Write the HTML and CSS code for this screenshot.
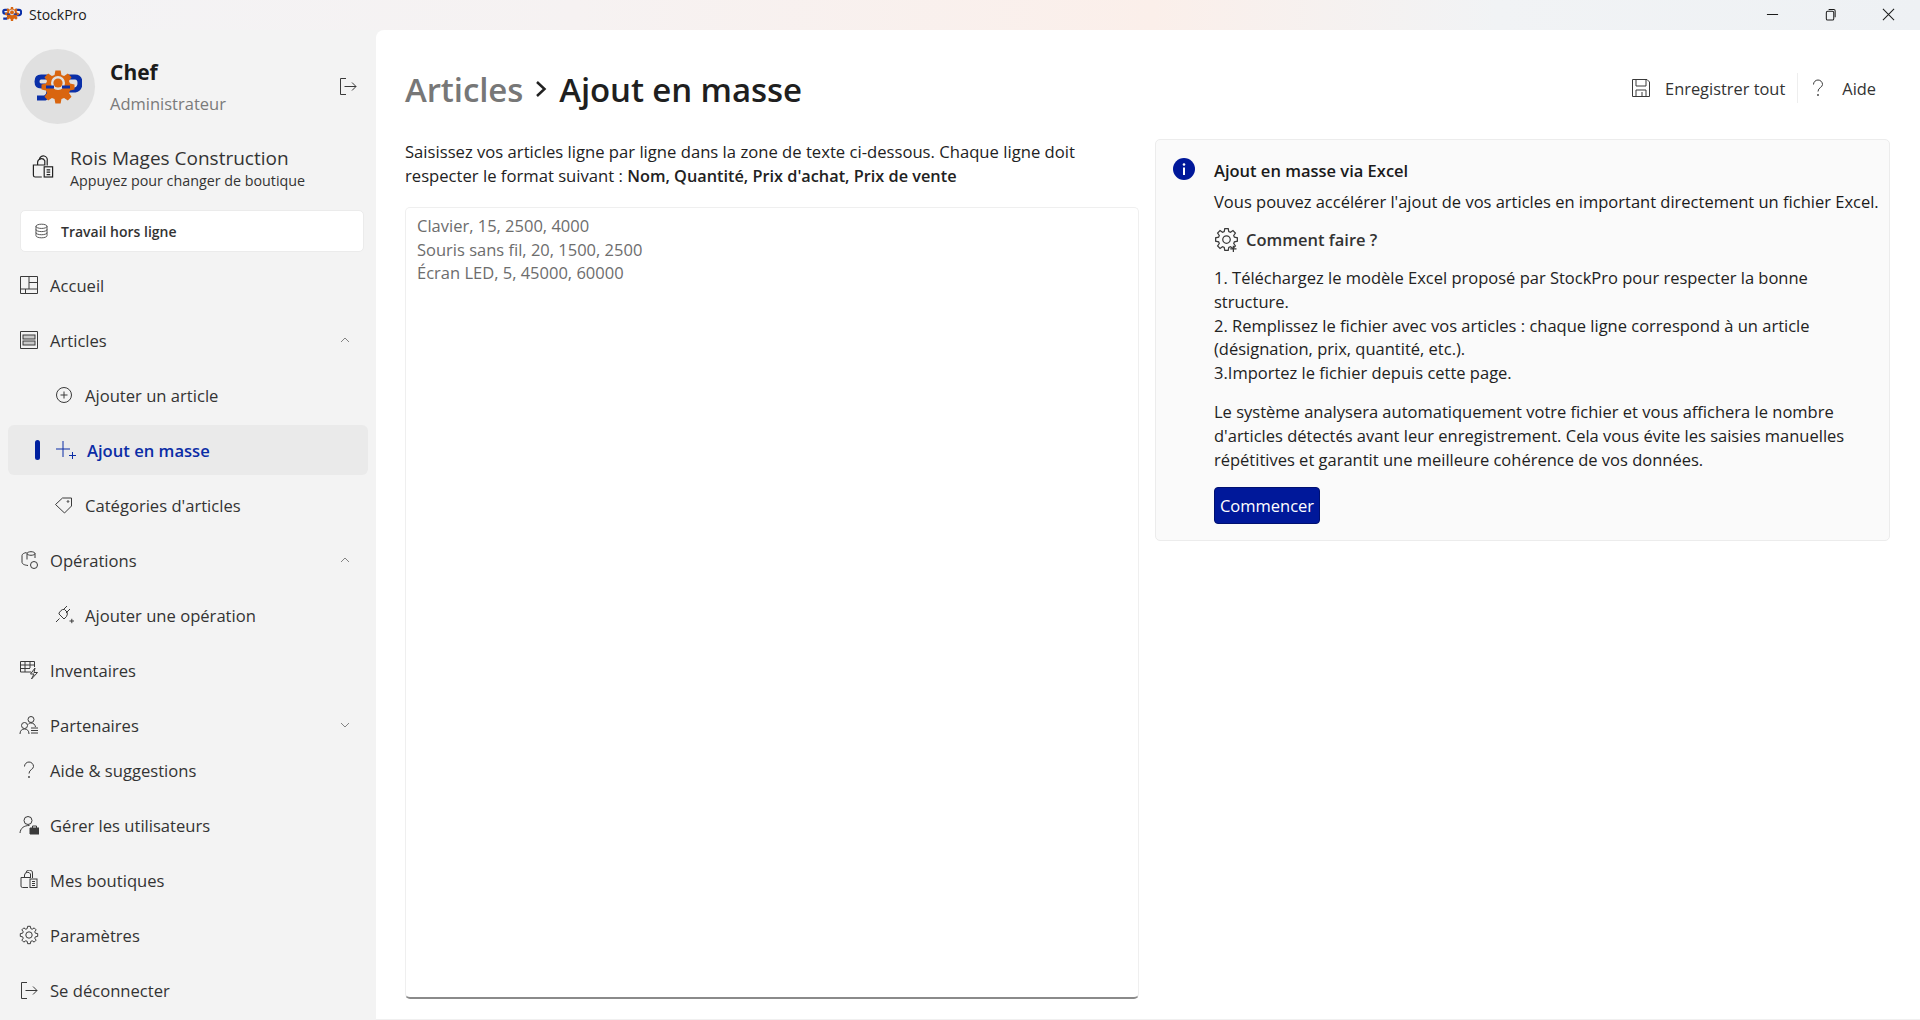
FILE: index.html
```html
<!DOCTYPE html>
<html lang="fr">
<head>
  <meta charset="UTF-8" />
  <title>StockPro</title>
  <link rel="stylesheet" href="styles.css">
</head>
<body>
  <svg class="defs" width="0" height="0">
    <symbol id="gear" viewBox="0 0 20 20">
      <polygon points="16.34,8.18 18.69,8.62 18.69,11.38 16.34,11.82 15.77,13.2 17.12,15.17 15.17,17.12 13.2,15.77 11.82,16.34 11.38,18.69 8.62,18.69 8.18,16.34 6.8,15.77 4.83,17.12 2.88,15.17 4.23,13.2 3.66,11.82 1.31,11.38 1.31,8.62 3.66,8.18 4.23,6.8 2.88,4.83 4.83,2.88 6.8,4.23 8.18,3.66 8.62,1.31 11.38,1.31 11.82,3.66 13.2,4.23 15.17,2.88 17.12,4.83 15.77,6.8" />
    </symbol>
    <symbol id="logo" viewBox="0 0 48 38">
      <path d="M15 9H7Q3 9 3 13.5T7 18H11Q15 18 15 23T11 30H3" fill="none" stroke="#0a2fa8" stroke-width="5" />
      <path d="M33 9H41Q46 9 46 15T41 22H33" fill="none" stroke="#0a2fa8" stroke-width="5" />
      <use href="#gear" x="5" y="0" width="38" height="38" fill="#d9650f" />
      <path d="M14 19a10 10 0 0 1 20 0z" fill="#d9650f" />
      <circle cx="24" cy="15" r="7" fill="#e0e0e0" />
      <circle cx="24" cy="15" r="4.6" fill="#d9650f" />
      <path d="M12 19H20M28 19H36" stroke="#0a2fa8" stroke-width="3" />
    </symbol>
    <symbol id="logout" viewBox="0 0 20 20">
      <path d="M8 2.5H2.5V18.5H8M6.5 10.5H18M14 6.5L18 10.5L14 14.5" />
    </symbol>
    <symbol id="shop" viewBox="0 0 20 20">
      <path d="M9 17.5H3.5A1.5 1.5 0 0 1 2 16V7.5H12M5.5 7.5V5A3.2 3.2 0 0 1 11.5 4V7.5M7 2.5A3.2 3.2 0 0 1 13.5 4V8" />
      <rect x="11" y="9" width="7" height="8.5" />
      <path d="M13 11.5H16M13 13.5H16M13 15.5H16" />
    </symbol>
    <symbol id="help" viewBox="0 0 20 20">
      <path d="M5.5 6.5A4.5 4.5 0 0 1 14.5 6.5C14.5 9.5 10 9.5 10 13.5" />
      <circle cx="10" cy="17" r=".6" />
    </symbol>
  </svg>

  <header class="titlebar">
    <div class="app-name">
      <svg class="app-logo"><use href="#logo" /></svg>
      <span>StockPro</span>
    </div>
    <div class="window-btns">
      <svg class="win-ic" viewBox="0 0 14 14"><path d="M1 7H13" /></svg>
      <svg class="win-ic" viewBox="0 0 14 14"><rect x="2.5" y="3.5" width="8" height="9.5" rx="1.5" /><path d="M5 1.5H10.5A1.5 1.5 0 0 1 12 3V10" /></svg>
      <svg class="win-ic" viewBox="0 0 14 14"><path d="M1 1L13 13M13 1L1 13" /></svg>
    </div>
  </header>

  <div class="app">
    <aside class="sidebar">
      <div class="profile">
        <div class="avatar"><svg class="avatar-logo"><use href="#logo" /></svg></div>
        <div class="profile-text">
          <div class="profile-name">Chef</div>
          <div class="profile-role">Administrateur</div>
        </div>
        <svg class="ic logout-ic"><use href="#logout" /></svg>
      </div>

      <div class="store">
        <svg class="store-ic ic"><use href="#shop" /></svg>
        <div>
          <div class="store-name">Rois Mages Construction</div>
          <div class="store-sub">Appuyez pour changer de boutique</div>
        </div>
      </div>

      <div class="offline">
        <svg class="ic offline-ic" viewBox="0 0 20 20"><ellipse cx="10" cy="4.5" rx="6.5" ry="2.5" /><path d="M3.5 4.5V15.5C3.5 17 6.5 18 10 18S16.5 17 16.5 15.5V4.5M3.5 8.2C3.5 9.7 6.5 10.7 10 10.7S16.5 9.7 16.5 8.2M3.5 11.9C3.5 13.4 6.5 14.4 10 14.4S16.5 13.4 16.5 11.9" /></svg>
        <span>Travail hors ligne</span>
      </div>

      <nav class="nav">
        <a class="nav-item">
          <svg class="ic" viewBox="0 0 20 20"><path d="M1.5 1.5H18.5V18.5H1.5ZM10 1.5V14M10 7.5H18.5M1.5 14H18.5M6.5 14V18.5" /></svg>
          <span>Accueil</span>
        </a>
        <a class="nav-item">
          <svg class="ic" viewBox="0 0 20 20"><path d="M1.5 1.5H18.5V18.5H1.5Z" /><rect class="ic-fill" x="4" y="5" width="12" height="4" /><rect class="ic-fill" x="4" y="11" width="12" height="4" /></svg>
          <span>Articles</span>
          <svg class="chev" viewBox="0 0 10 10"><path d="M1 7L5 3L9 7" /></svg>
        </a>
        <a class="nav-item sub">
          <svg class="ic" viewBox="0 0 20 20"><circle cx="10" cy="10" r="7.5" /><path d="M10 6.5V13.5M6.5 10H13.5" /></svg>
          <span>Ajouter un article</span>
        </a>
        <a class="nav-item sub active">
          <i class="active-bar"></i>
          <svg class="ic" viewBox="0 0 20 20"><path d="M0 9H14M7 1V17M13 15.5H20M16.5 12V19" /></svg>
          <span>Ajout en masse</span>
        </a>
        <a class="nav-item sub">
          <svg class="ic" viewBox="0 0 20 20"><path d="M1.5 9.5L8.5 3H17.5V11L10.5 18Z" /><circle cx="14" cy="6.5" r=".8" /></svg>
          <span>Catégories d'articles</span>
        </a>
        <a class="nav-item">
          <svg class="ic" viewBox="0 0 20 20"><path d="M8 9.5V3.5C8 2.5 10 1.7 12 1.7S16 2.5 16 3.5V8M8 3.5C8 4.5 10 5.3 12 5.3S16 4.5 16 3.5M3 12V5.5C3 4 5 3 7.5 2.5M3 12C3 14 5 15 9 15.5" /><circle cx="15" cy="15" r="3.5" /></svg>
          <span>Opérations</span>
          <svg class="chev" viewBox="0 0 10 10"><path d="M1 7L5 3L9 7" /></svg>
        </a>
        <a class="nav-item sub">
          <svg class="ic" viewBox="0 0 20 20"><path d="M2 17L5.5 13.5M5 9L10 14L12.5 11.5Q14 9 13 7L10.5 4.5Q8.5 4 7 5.5L5 8ZM9 5L13 1M12 8L16 4M15.5 16H20M17.8 13.8V18.2" /></svg>
          <span>Ajouter une opération</span>
        </a>
        <a class="nav-item">
          <svg class="ic" viewBox="0 0 20 20"><path d="M12 12H1.5V1.5H15.5V7M1.5 5H15.5M1.5 8.5H11M6 1.5V12M11 1.5V8M16 8L11.5 14H15L12.5 19L18.5 12.5H15Z" /></svg>
          <span>Inventaires</span>
        </a>
        <a class="nav-item">
          <svg class="ic" viewBox="0 0 20 20"><circle cx="5.5" cy="10.5" r="3" /><circle cx="12" cy="4.5" r="3" /><path d="M1 19C1 15.5 3 14 5.5 14S10 15.5 10 19M9 9.5C10 8.3 11 8 12 8C14.5 8 16 9.5 16.5 12M12 13H19M12 15.5H19M12 18H19" /></svg>
          <span>Partenaires</span>
          <svg class="chev" viewBox="0 0 10 10"><path d="M1 3L5 7L9 3" /></svg>
        </a>
      </nav>

      <nav class="nav nav-footer">
        <a class="nav-item">
          <svg class="ic"><use href="#help" /></svg>
          <span>Aide &amp; suggestions</span>
        </a>
        <a class="nav-item">
          <svg class="ic" viewBox="0 0 20 20"><circle cx="9" cy="5.5" r="4" /><path d="M1 18C1.5 13 5 10.5 10.5 10.5" /><path class="ic-fill-dark" d="M11 13H20V19H11Z" /><path d="M13.5 13V11H17.5V13" /></svg>
          <span>Gérer les utilisateurs</span>
        </a>
        <a class="nav-item">
          <svg class="ic"><use href="#shop" /></svg>
          <span>Mes boutiques</span>
        </a>
        <a class="nav-item">
          <svg class="ic" viewBox="0 0 20 20"><use href="#gear" /><circle cx="10" cy="10" r="3.2" /></svg>
          <span>Paramètres</span>
        </a>
        <a class="nav-item">
          <svg class="ic"><use href="#logout" /></svg>
          <span>Se déconnecter</span>
        </a>
      </nav>
    </aside>

    <main class="content">
      <div class="page-head">
        <h1 class="crumbs">
          <span class="crumb-parent">Articles</span>
          <svg class="crumb-sep" viewBox="0 0 12 18"><path d="M2 2L9.5 9L2 16" /></svg>
          <span>Ajout en masse</span>
        </h1>
        <div class="toolbar">
          <a class="tool">
            <svg class="ic" viewBox="0 0 20 20"><path d="M1.5 1.5H16L18.5 4V18.5H1.5ZM5 1.5V8H15V1.5M5 18.5V12H15V18.5M11 14V18.5" /></svg>
            <span>Enregistrer tout</span>
          </a>
          <i class="tool-sep"></i>
          <a class="tool">
            <svg class="ic"><use href="#help" /></svg>
            <span>Aide</span>
          </a>
        </div>
      </div>

      <div class="columns">
        <section class="entry">
          <p class="intro">Saisissez vos articles ligne par ligne dans la zone de texte ci-dessous. Chaque ligne doit<br>respecter le format suivant : <strong>Nom, Quantité, Prix d'achat, Prix de vente</strong></p>
          <div class="textbox">
            <div class="placeholder">Clavier, 15, 2500, 4000<br>Souris sans fil, 20, 1500, 2500<br>Écran LED, 5, 45000, 60000</div>
          </div>
        </section>

        <section class="info-card">
          <svg class="info-ic" viewBox="0 0 22 22"><circle cx="11" cy="11" r="11" /><rect class="info-mark" x="10" y="9.5" width="2" height="7.5" /><circle class="info-mark" cx="11" cy="6.5" r="1.3" /></svg>
          <div class="info-body">
            <div class="info-title">Ajout en masse via Excel</div>
            <div class="info-lead">Vous pouvez accélérer l'ajout de vos articles en important directement un fichier Excel.</div>
            <div class="howto">
              <svg class="ic howto-ic" viewBox="0 0 20 20"><use href="#gear" /><circle cx="10" cy="10" r="3" /><path d="M15.5 15V20M13 17.5H18" /></svg>
              <span>Comment faire ?</span>
            </div>
            <p class="steps">1. Téléchargez le modèle Excel proposé par StockPro pour respecter la bonne<br>structure.<br>2. Remplissez le fichier avec vos articles : chaque ligne correspond à un article<br>(désignation, prix, quantité, etc.).<br>3.Importez le fichier depuis cette page.</p>
            <p class="steps">Le système analysera automatiquement votre fichier et vous affichera le nombre<br>d'articles détectés avant leur enregistrement. Cela vous évite les saisies manuelles<br>répétitives et garantit une meilleure cohérence de vos données.</p>
            <button class="primary">Commencer</button>
          </div>
        </section>
      </div>
    </main>
  </div>
</body>
</html>
```

FILE: styles.css
```css
* {
  box-sizing: border-box;
}
html, body {
  height: 100%;
}
body {
  margin: 0;
  font-family: "Open Sans", "Noto Sans", sans-serif;
  font-size: 16.5px;
  color: #1b1b1b;
  background: #f3f3f3;
  display: flex;
  flex-direction: column;
  overflow: hidden;
}
.defs {
  position: absolute;
}

/* title bar */
.titlebar {
  height: 30px;
  flex: none;
  display: flex;
  align-items: center;
  justify-content: space-between;
  background: linear-gradient(90deg, #f3f3f5 0%, #f6f2f2 30%, #fbefea 60%, #f1f3f5 78%, #eef1f4 100%);
}
.app-name {
  display: flex;
  align-items: center;
  gap: 7px;
  padding-left: 2px;
  padding-bottom: 2px;
  font-size: 14px;
}
.app-logo {
  width: 20px;
  height: 16px;
}
.window-btns {
  display: flex;
  align-items: center;
  gap: 45px;
  padding-right: 25px;
  padding-bottom: 2px;
}
.win-ic {
  width: 13px;
  height: 13px;
  fill: none;
  stroke: #1b1b1b;
  stroke-width: 1.1;
}

/* shared icons */
.ic {
  width: 20px;
  height: 20px;
  flex: none;
  fill: none;
  stroke: #3a3a3a;
  stroke-width: 1;
}
.ic-fill {
  fill: #c9c9c9;
}
.ic-fill-dark {
  fill: #3a3a3a;
}

/* sidebar */
.app {
  flex: 1;
  min-height: 0;
  display: flex;
}
.sidebar {
  width: 376px;
  flex: none;
}
.profile {
  display: flex;
  align-items: center;
  margin: 19px 0 0 20px;
}
.avatar {
  width: 75px;
  height: 75px;
  border-radius: 50%;
  background: #e0e0e0;
  display: flex;
  align-items: center;
  justify-content: center;
}
.avatar-logo {
  width: 48px;
  height: 38px;
}
.profile-text {
  margin-left: 15px;
  padding-top: 2px;
  flex: 1;
}
.profile-name {
  font-size: 21px;
  font-weight: 700;
  line-height: 30px;
  margin-bottom: 3px;
}
.profile-role {
  font-size: 16.5px;
  line-height: 28px;
  color: #7a7a7a;
}
.logout-ic {
  margin-right: 18px;
  margin-bottom: 2px;
}
.store {
  display: flex;
  align-items: center;
  gap: 15px;
  margin: 21px 0 0 31px;
  height: 46px;
}
.store-ic {
  width: 24px;
  height: 26px;
  stroke: #222;
}
.store-name {
  font-size: 19px;
  line-height: 26px;
  color: #333;
}
.store-sub {
  font-size: 14.3px;
  line-height: 20px;
  color: #333;
}
.offline {
  display: flex;
  align-items: center;
  gap: 11px;
  height: 42px;
  margin: 19px 12px 8px 20px;
  padding-left: 12px;
  background: #fff;
  border: 1px solid #ebebeb;
  border-radius: 5px;
  font-size: 14px;
  font-weight: 600;
  color: #333;
}
.offline-ic {
  width: 17px;
  height: 18px;
}
.nav {
  display: flex;
  flex-direction: column;
  gap: 5px;
  margin: 0 8px;
  width: 360px;
}
.nav-footer {
  margin-top: -5px;
}
.nav-item {
  position: relative;
  display: flex;
  align-items: center;
  gap: 11px;
  height: 50px;
  padding-left: 11px;
  font-size: 16.6px;
  color: #333;
  border-radius: 6px;
}
.nav-item.sub {
  padding-left: 46px;
}
.nav-item.sub.active {
  padding-left: 48px;
  background: #eaeaea;
  color: #0b2da6;
  font-weight: 600;
}
.nav-item.active .ic {
  stroke: #0b2da6;
}
.active-bar {
  position: absolute;
  left: 27px;
  top: 15px;
  width: 5px;
  height: 20px;
  border-radius: 3px;
  background: #00209f;
}
.chev {
  width: 10px;
  height: 10px;
  margin-left: auto;
  margin-right: 18px;
  fill: none;
  stroke: #666;
  stroke-width: .8;
}

/* main content */
.content {
  flex: 1;
  min-width: 0;
  background: #fff;
  border-top-left-radius: 8px;
  border-bottom: 1px solid #f0f0f0;
  padding: 35px 30px 0 29px;
}
.page-head {
  display: flex;
  align-items: center;
  justify-content: space-between;
  height: 48px;
  margin-bottom: 26px;
}
.crumbs {
  display: flex;
  align-items: center;
  gap: 12px;
  margin: 0;
  font-size: 33px;
  font-weight: 600;
  letter-spacing: -.1px;
  color: #1f1f1f;
}
.crumb-parent {
  color: #777;
}
.crumb-sep {
  width: 12px;
  height: 18px;
  fill: none;
  stroke: #222;
  stroke-width: 2.5;
}
.toolbar {
  display: flex;
  align-items: center;
  padding-right: 14px;
  margin-bottom: 2px;
}
.tool {
  display: flex;
  align-items: center;
  gap: 14px;
  font-size: 16.4px;
  color: #333;
}
.tool-sep {
  width: 1px;
  height: 30px;
  background: #eee;
  margin: 0 10px 0 12px;
}
.columns {
  display: grid;
  grid-template-columns: 734px 1fr;
  gap: 16px;
}
.entry {
  display: flex;
  flex-direction: column;
  padding-top: 1px;
}
.intro {
  margin: 0 0 19px;
  font-size: 16.65px;
  line-height: 24px;
  color: #222;
}
.intro strong {
  font-size: 16.3px;
  font-weight: 600;
}
.textbox {
  height: 792px;
  padding: 6px 11px;
  background: #fff;
  border: 1px solid #efefef;
  border-bottom: 2px solid #8a8a8a;
  border-radius: 5px;
}
.placeholder {
  line-height: 23.5px;
  color: #6d6d6d;
}
.info-card {
  align-self: start;
  display: flex;
  gap: 19px;
  height: 402px;
  padding: 18px 6px 0 17px;
  background: #fafafa;
  border: 1px solid #ececec;
  border-radius: 5px;
}
.info-ic {
  width: 22px;
  height: 22px;
  flex: none;
  fill: #00189a;
}
.info-mark {
  fill: #fff;
}
.info-body {
  flex: 1;
  min-width: 0;
}
.info-title {
  font-weight: 600;
  line-height: 26px;
}
.info-lead {
  line-height: 26px;
  margin-top: 5px;
}
.howto {
  display: flex;
  align-items: center;
  gap: 7px;
  margin-top: 6px;
  height: 36px;
  font-weight: 600;
  color: #333;
}
.howto-ic {
  width: 25px;
  height: 25px;
}
.steps {
  margin: 9px 0 0;
  line-height: 23.8px;
  white-space: nowrap;
  color: #222;
}
.steps + .steps {
  margin-top: 15px;
}
.primary {
  display: block;
  width: 106px;
  height: 37px;
  margin-top: 16px;
  padding: 0;
  font: inherit;
  color: #fff;
  background: #00189a;
  border: 1px solid #001070;
  border-radius: 4px;
}
```
